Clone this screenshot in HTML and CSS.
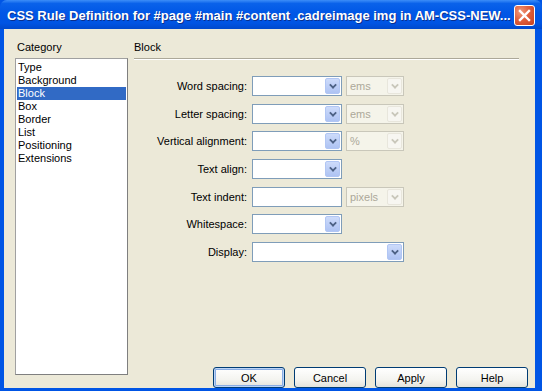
FILE: index.html
```html
<!DOCTYPE html>
<html lang="en">
<head>
  <meta charset="UTF-8">
  <title>CSS Rule Definition</title>
  <link rel="stylesheet" href="styles.css">
</head>
<body>
  <div class="window">
    <div class="titlebar">
      <span class="title">CSS Rule Definition for #page #main #content .cadreimage img in AM-CSS-NEW...</span>
      <span class="close">
        <svg width="13" height="13" viewBox="0 0 13 13"><path d="M2 2 L11 11 M11 2 L2 11" stroke="#fff" stroke-width="2.4" stroke-linecap="square"/></svg>
      </span>
    </div>
    <div class="client">
      <div class="category">
        <div class="cat-label">Category</div>
        <ul class="cat-list">
          <li>Type</li>
          <li>Background</li>
          <li class="selected">Block</li>
          <li>Box</li>
          <li>Border</li>
          <li>List</li>
          <li>Positioning</li>
          <li>Extensions</li>
        </ul>
      </div>
      <div class="panel">
        <div class="panel-head">Block</div>
        <div class="form">
          <div class="row">
            <label>Word spacing:</label>
            <div class="select w90"><span class="arrow"></span></div>
            <div class="select unit disabled"><span class="val">ems</span><span class="arrow"></span></div>
          </div>
          <div class="row">
            <label>Letter spacing:</label>
            <div class="select w90"><span class="arrow"></span></div>
            <div class="select unit disabled"><span class="val">ems</span><span class="arrow"></span></div>
          </div>
          <div class="row">
            <label>Vertical alignment:</label>
            <div class="select w90"><span class="arrow"></span></div>
            <div class="select unit disabled"><span class="val">%</span><span class="arrow"></span></div>
          </div>
          <div class="row">
            <label>Text align:</label>
            <div class="select w90"><span class="arrow"></span></div>
          </div>
          <div class="row">
            <label>Text indent:</label>
            <div class="textbox"></div>
            <div class="select unit disabled"><span class="val">pixels</span><span class="arrow"></span></div>
          </div>
          <div class="row">
            <label>Whitespace:</label>
            <div class="select w90"><span class="arrow"></span></div>
          </div>
          <div class="row">
            <label>Display:</label>
            <div class="select wide"><span class="arrow"></span></div>
          </div>
        </div>
        <div class="buttons">
          <button class="default">OK</button>
          <button>Cancel</button>
          <button>Apply</button>
          <button>Help</button>
        </div>
      </div>
    </div>
  </div>
</body>
</html>
```

FILE: styles.css
```css
body {
  margin: 0;
  background: #0055e5;
  font-family: 'Liberation Sans', Arial, sans-serif;
  font-size: 11px;
  color: #000;
}
.window {
  width: 542px;
  height: 391px;
  display: flex;
  flex-direction: column;
  background: #0055e5;
  border-radius: 7px 7px 0 0;
  overflow: hidden;
}
.titlebar {
  height: 29px;
  flex: none;
  display: flex;
  align-items: center;
  justify-content: space-between;
  padding: 0 7px 0 7px;
  background: linear-gradient(to bottom, #3d8ef8 0%, #0a62ea 12%, #0057e6 45%, #0054e3 80%, #0049cc 100%);
}
.title {
  color: #fff;
  font-weight: bold;
  font-size: 13px;
  white-space: nowrap;
  text-shadow: 1px 1px 0 #0b2f8c;
  margin-top: 1px;
}
.close {
  width: 19px;
  height: 19px;
  border: 1px solid #fff;
  border-radius: 3px;
  display: flex;
  align-items: center;
  justify-content: center;
  background: radial-gradient(circle at 30% 30%, #f09a7c 0%, #e0603d 45%, #c5401e 100%);
  margin-top: 2px;
}
.client {
  flex: 1;
  display: flex;
  margin: 0 7px 3px 4px;
  background: #ece9d8;
}
.category {
  padding: 12px 0 0 11px;
  width: 113px;
  flex: none;
}
.cat-label {
  line-height: 13px;
  padding-left: 2px;
}
.cat-list {
  list-style: none;
  margin: 4px 0 0 0;
  padding: 2px 1px 0 1px;
  height: 313px;
  background: #fff;
  border: 1px solid #7f9db9;
  border-color: #a0a0a0 #7f7f7f #7f7f7f #a0a0a0;
}
.cat-list li {
  line-height: 13px;
  padding-left: 1px;
}
.cat-list li.selected {
  background: #316ac5;
  color: #fff;
}
.panel {
  flex: 1;
  display: flex;
  flex-direction: column;
  margin-left: 6px;
  margin-right: 7px;
}
.panel-head {
  line-height: 13px;
  padding: 12px 0 4px 0;
  margin-right: 9px;
  border-bottom: 1px solid #aca899;
  box-shadow: 0 1px 0 #fff;
}
.form {
  margin-top: 17px;
  display: flex;
  flex-direction: column;
  gap: 7.67px;
}
.row {
  display: flex;
  align-items: center;
  height: 20px;
}
.row label {
  width: 113px;
  margin-right: 5px;
  text-align: right;
}
.select, .textbox {
  height: 20px;
  box-sizing: border-box;
  border: 1px solid #7f9db9;
  background: #fff;
  position: relative;
  display: flex;
  align-items: center;
}
.w90, .textbox {
  width: 90px;
}
.wide {
  width: 152px;
}
.unit {
  width: 58px;
  margin-left: 4px;
}
.select.disabled {
  border-color: #c9c7ba;
  background: #f5f4ea;
}
.val {
  color: #aca899;
  padding-left: 3px;
  flex: 1;
}
.arrow {
  position: absolute;
  right: 1px;
  top: 1px;
  width: 15px;
  height: 16px;
  box-sizing: border-box;
  border: 1px solid #b1c6f4;
  border-radius: 2px;
  background: linear-gradient(to bottom, #cddbfa 0%, #aec3f3 100%);
}
.arrow::after {
  content: '';
  position: absolute;
  left: 4px;
  top: 3px;
  width: 4px;
  height: 4px;
  border-right: 2px solid #4d6185;
  border-bottom: 2px solid #4d6185;
  transform: rotate(45deg) scale(0.9);
}
.disabled .arrow {
  border-color: #e8e6dc;
  background: #f7f6f1;
}
.disabled .arrow::after {
  border-color: #c9c7ba;
}
.buttons {
  margin-top: auto;
  display: flex;
  justify-content: flex-end;
  gap: 9px;
}
.buttons button {
  width: 72px;
  height: 21px;
  font-family: 'Liberation Sans', Arial, sans-serif;
  font-size: 11px;
  color: #000;
  border: 1px solid #003c74;
  border-radius: 3px;
  background: linear-gradient(to bottom, #ffffff 0%, #f4f4f0 60%, #e3e2da 100%);
  padding: 0;
}
.buttons button.default {
  box-shadow: inset 0 0 0 1px #bcd4f6, inset 0 0 0 2px #89ade4;
}
```
